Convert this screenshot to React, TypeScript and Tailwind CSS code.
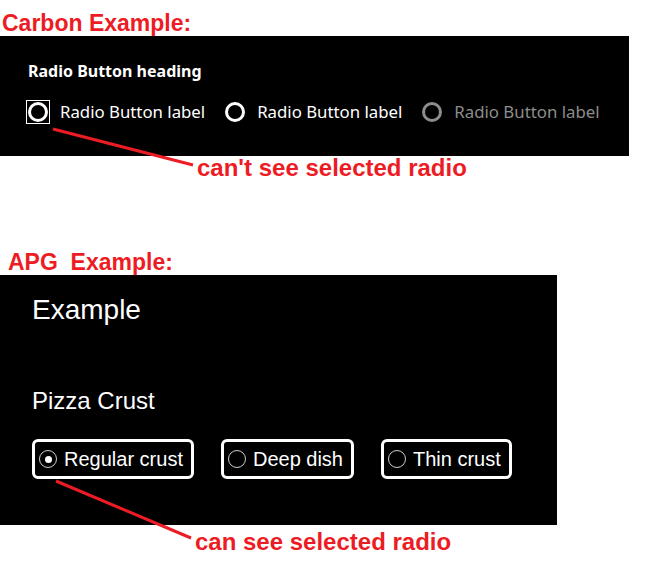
import React from "react";

const red = "text-[#ed1c24]";
const annoFont = { fontFamily: '"Comic Sans MS", "Liberation Sans", Arial, sans-serif' };

function CarbonRadio({ label, focused, disabled }: { label: string; focused?: boolean; disabled?: boolean }) {
  return (
    <div className="flex items-center">
      <span
        className={
          "block -mx-[2px] p-[1px] border " + (focused ? "border-white" : "border-transparent")
        }
      >
        <span
          className={
            "block w-[20px] h-[20px] rounded-full border-[3px] " +
            (disabled ? "border-[#8d8d8d]" : "border-white")
          }
        />
      </span>
      <span className={"ml-[12px] text-[16.8px] leading-[22px] " + (disabled ? "text-[#8d8d8d]" : "text-white")}>{label}</span>
    </div>
  );
}

function ApgRadio({ label, checked }: { label: string; checked?: boolean }) {
  return (
    <div className="flex items-center h-[40px] border-[3px] border-white rounded-[6px] pl-[4px] pr-[8px]">
      <span className="flex items-center justify-center w-[18px] h-[18px] rounded-full border-[1.5px] border-[#d0d0d0]">
        {checked && <span className="block w-[7px] h-[7px] rounded-full bg-white" />}
      </span>
      <span className="ml-[7px] text-white text-[20px] leading-[24px]">{label}</span>
    </div>
  );
}

export default function App() {
  return (
    <div className="relative w-[666px] h-[567px] bg-white overflow-hidden" style={{ fontFamily: '"Liberation Sans", Arial, sans-serif' }}>
      <div className="h-[36px] pt-[10px] pl-[2px]">
        <div className={`${red} font-bold text-[23px] leading-[26px]`} style={annoFont}>Carbon Example:</div>
      </div>
      <div className="w-[629px] h-[120px] bg-black pl-[28px] pt-[26px]" style={{ fontFamily: '"Noto Sans", sans-serif' }}>
        <div className="text-white font-bold text-[16px] leading-[18px]">Radio Button heading</div>
        <div className="flex items-center gap-[20px] mt-[20px]">
          <CarbonRadio label="Radio Button label" focused />
          <CarbonRadio label="Radio Button label" />
          <CarbonRadio label="Radio Button label" disabled />
        </div>
      </div>
      <div className="h-[93px] pl-[197px]">
        <div className={`${red} font-bold text-[24px] leading-[24px]`} style={annoFont}>can't see selected radio</div>
      </div>
      <div className="h-[26px] pl-[8px]">
        <div className={`${red} font-bold text-[23px] leading-[26px] whitespace-pre`} style={annoFont}>APG  Example:</div>
      </div>
      <div className="w-[557px] h-[250px] bg-black pl-[32px] pt-[19px]">
        <div className="text-white text-[28px] leading-[32px]">Example</div>
        <div className="text-white text-[24px] leading-[28px] mt-[61px]">Pizza Crust</div>
        <div className="flex gap-[27px] mt-[24px]">
          <ApgRadio label="Regular crust" checked />
          <ApgRadio label="Deep dish" />
          <ApgRadio label="Thin crust" />
        </div>
      </div>
      <div className="pl-[195px] pt-[5px]">
        <div className={`${red} font-bold text-[24px] leading-[24px]`} style={annoFont}>can see selected radio</div>
      </div>
      <svg className="absolute inset-0 pointer-events-none" width="666" height="567">
        <line x1="53" y1="129" x2="193" y2="165" stroke="#ed1c24" strokeWidth="3" />
        <line x1="56" y1="481" x2="191" y2="538" stroke="#ed1c24" strokeWidth="3" />
      </svg>
    </div>
  );
}
